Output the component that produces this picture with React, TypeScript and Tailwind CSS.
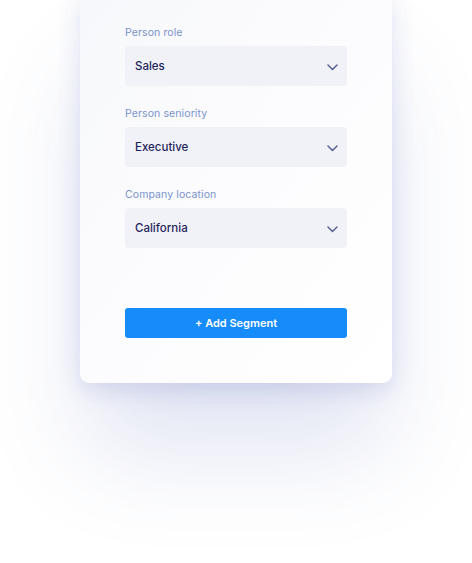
import React from 'react';

const fields = [
  { label: 'Person role', value: 'Sales' },
  { label: 'Person seniority', value: 'Executive' },
  { label: 'Company location', value: 'California' },
];

const Chevron: React.FC = () => (
  <svg width="11" height="7" viewBox="0 0 11 7" fill="none">
    <path d="M1 1l4.5 4.5L10 1" stroke="#5b6392" strokeWidth="1.5" strokeLinecap="round" strokeLinejoin="round" />
  </svg>
);

export default function App() {
  return (
    <div
      className="w-[472px] h-[563px] overflow-hidden bg-white"
      style={{ fontFamily: 'Inter, "Noto Sans", sans-serif' }}
    >
      <div className="mx-auto mt-[-8px] w-[312px] rounded-[10px] bg-gradient-to-br from-[#f7f8fb] via-[#fcfcfe] to-white px-[45px] pt-[33px] pb-[45px] shadow-[0_75px_95px_-10px_rgba(70,90,180,0.17),0_10px_22px_rgba(70,90,180,0.12),0_0_30px_rgba(70,90,180,0.05)]">
        <div className="flex flex-col gap-[20px]">
          {fields.map(({ label, value }) => (
            <div key={label} className="flex flex-col gap-[6px]">
              <span className="text-[10.5px] leading-[15px] tracking-[0.1px] text-[#7a93cc]">{label}</span>
              <div className="flex h-[40px] items-center justify-between rounded-[4px] bg-[#f1f2f7] pl-[10px] pr-[9px] pt-[2px]">
                <span className="text-[11.5px] font-medium text-[#1f255c]">{value}</span>
                <Chevron />
              </div>
            </div>
          ))}
        </div>

        <button className="mt-[60px] flex h-[30px] w-full items-center justify-center rounded-[3px] bg-[#168bfa] text-[11px] font-semibold text-white">
          + Add Segment
        </button>
      </div>
    </div>
  );
}
